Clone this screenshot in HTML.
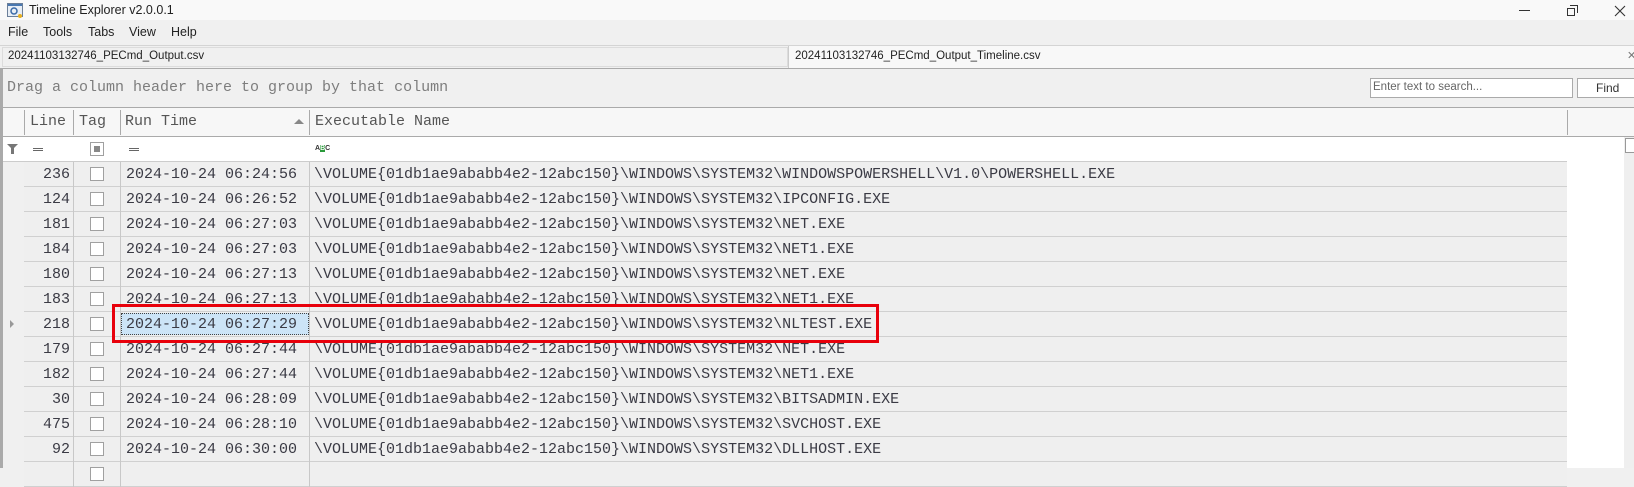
<!DOCTYPE html>
<html><head><meta charset="utf-8"><style>
*{margin:0;padding:0;box-sizing:border-box}
body{width:1634px;height:468px;overflow:hidden;background:#f0f0f0;font-family:"Liberation Sans",sans-serif;position:relative;color:#222}
.a{position:absolute}
.mono{font-family:"Liberation Mono",monospace;font-size:15px;color:#3a3a44;white-space:pre}
.ui{font-size:12.5px;white-space:pre}
.vl{position:absolute;width:1px;background:#c8c8c8}
.cb{position:absolute;width:14px;height:14px;border:1px solid #a0a0a0;background:#fff}
</style></head><body>
<!-- title -->
<div class="a" style="left:0;top:0;width:1634px;height:20px;background:#f9f9f9"></div>
<svg class="a" style="left:7px;top:3px" width="16" height="15" viewBox="0 0 16 15"><rect x="0.5" y="0.5" width="15" height="13" fill="#e8eef5" stroke="#6b7f99"/><rect x="1" y="1" width="14" height="2" fill="#4a78b0"/><circle cx="7" cy="8" r="3" fill="none" stroke="#3a6aa8" stroke-width="1.5"/><circle cx="13" cy="13" r="2" fill="#e8b020"/></svg>
<div class="a ui" style="left:29px;top:3px;font-size:12.5px">Timeline Explorer v2.0.0.1</div>
<div class="a" style="left:1519px;top:10px;width:11px;height:1px;background:#333"></div>
<div class="a" style="left:1567px;top:8px;width:8px;height:8px;border:1px solid #333"></div>
<div class="a" style="left:1570px;top:5px;width:8px;height:8px;border-top:1px solid #333;border-right:1px solid #333"></div>
<svg class="a" style="left:1614px;top:5px" width="12" height="12" viewBox="0 0 12 12"><path d="M1 1L11 11M11 1L1 11" stroke="#333" stroke-width="1.1"/></svg>
<!-- menu -->
<div class="a ui" style="left:8px;top:25px">File</div>
<div class="a ui" style="left:43px;top:25px">Tools</div>
<div class="a ui" style="left:88px;top:25px">Tabs</div>
<div class="a ui" style="left:129px;top:25px">View</div>
<div class="a ui" style="left:171px;top:25px">Help</div>
<div class="a" style="left:0;top:45px;width:1634px;height:1px;background:#d4d4d4"></div>
<!-- tabs -->
<div class="a" style="left:2px;top:47px;width:786px;height:20px;background:#f0f0f0;border:1px solid #dcdcdc"></div>
<div class="a ui" style="left:8px;top:50px;font-size:11.5px">20241103132746_PECmd_Output.csv</div>
<div class="a" style="left:788px;top:46px;width:846px;height:22px;background:#f8f8f8;border-left:1px solid #ccc"></div>
<div class="a ui" style="left:795px;top:50px;font-size:11.5px">20241103132746_PECmd_Output_Timeline.csv</div>
<div class="a" style="left:1627px;top:49px;font-size:11px;color:#777">✕</div>
<div class="a" style="left:0;top:68px;width:1634px;height:1px;background:#aaa"></div>
<div class="a" style="left:0;top:68px;width:3px;height:400px;background:#aaa"></div>
<!-- group panel -->
<div class="a mono" style="left:7px;top:79px;color:#7d7d7d">Drag a column header here to group by that column</div>
<div class="a" style="left:1370px;top:78px;width:203px;height:20px;background:#fff;border:1px solid #aaa"></div>
<div class="a ui" style="left:1373px;top:81px;font-size:11.5px;color:#666">Enter text to search...</div>
<div class="a" style="left:1577px;top:78px;width:60px;height:20px;background:#fff;border:1px solid #aaa"></div>
<div class="a ui" style="left:1596px;top:81px;font-size:12px;color:#333">Find</div>
<div class="a" style="left:3px;top:107px;width:1631px;height:1px;background:#aaa"></div>
<!-- header -->
<div class="a" style="left:3px;top:108px;width:1631px;height:28px;background:#f7f7f7"></div>
<div class="a" style="left:3px;top:136px;width:1631px;height:1px;background:#aaa"></div>
<div class="vl" style="left:24px;top:110px;height:25px;background:#aaa"></div>
<div class="vl" style="left:73px;top:110px;height:25px;background:#aaa"></div>
<div class="vl" style="left:120px;top:110px;height:25px;background:#aaa"></div>
<div class="vl" style="left:309px;top:110px;height:25px;background:#aaa"></div>
<div class="vl" style="left:1567px;top:110px;height:25px;background:#aaa"></div>
<div class="a mono" style="left:30px;top:113px;color:#555">Line</div>
<div class="a mono" style="left:79px;top:113px;color:#555">Tag</div>
<div class="a mono" style="left:125px;top:113px;color:#555">Run Time</div>
<div class="a" style="left:294px;top:119px;width:0;height:0;border-left:5px solid transparent;border-right:5px solid transparent;border-bottom:5px solid #888"></div>
<div class="a mono" style="left:315px;top:113px;color:#555">Executable Name</div>
<!-- filter row -->
<div class="a" style="left:3px;top:137px;width:1564px;height:24px;background:#fff"></div>
<div class="a" style="left:1567px;top:137px;width:57px;height:331px;background:#fff"></div>
<div class="a" style="left:1624px;top:137px;width:10px;height:331px;background:#efefef"></div>
<div class="a" style="left:1625px;top:138px;width:10px;height:15px;border:1px solid #999;background:#fff"></div>
<svg class="a" style="left:7px;top:144px" width="11" height="10" viewBox="0 0 11 10"><path d="M0 0H11L7 4V10H4V4Z" fill="#777"/></svg>
<div class="a" style="left:33px;top:148px;width:10px;height:3px;border-top:1px solid #666;border-bottom:1px solid #666"></div>
<div class="a" style="left:129px;top:148px;width:10px;height:3px;border-top:1px solid #666;border-bottom:1px solid #666"></div>
<div class="cb" style="left:90px;top:142px"></div>
<div class="a" style="left:94px;top:146px;width:6px;height:6px;background:#888"></div>
<div class="a" style="left:315px;top:145px;font-size:7px;font-weight:bold;color:#333">A<span style="background:#2a9a3a;color:#fff">B</span>C</div>
<div class="a" style="left:3px;top:161px;width:1564px;height:1px;background:#ccc"></div>
<div id="rows"></div>
<script>
var d=[["236","06:24:56","WINDOWSPOWERSHELL\\V1.0\\POWERSHELL.EXE"],["124","06:26:52","IPCONFIG.EXE"],["181","06:27:03","NET.EXE"],["184","06:27:03","NET1.EXE"],["180","06:27:13","NET.EXE"],["183","06:27:13","NET1.EXE"],["218","06:27:29","NLTEST.EXE"],["179","06:27:44","NET.EXE"],["182","06:27:44","NET1.EXE"],["30","06:28:09","BITSADMIN.EXE"],["475","06:28:10","SVCHOST.EXE"],["92","06:30:00","DLLHOST.EXE"],["","",""]];
var h="";
d.forEach(function(r,i){var y=162+i*25;
h+='<div class="a" style="left:24px;top:'+y+'px;width:1543px;height:24px;background:#efefef"></div>';
h+='<div class="a" style="left:24px;top:'+(y+24)+'px;width:1543px;height:1px;background:#d0d0d0"></div>';
h+='<div class="vl" style="left:73px;top:'+y+'px;height:25px"></div><div class="vl" style="left:120px;top:'+y+'px;height:25px"></div><div class="vl" style="left:309px;top:'+y+'px;height:25px"></div>';
h+='<div class="cb" style="left:90px;top:'+(y+5)+'px"></div>';
if(i==6){h+='<div class="a" style="left:121px;top:'+(y+1)+'px;width:188px;height:22px;background:#cce4f7;border:1px dotted #444"></div>';
h+='<div class="a" style="left:10px;top:'+(y+8)+'px;width:0;height:0;border-top:4px solid transparent;border-bottom:4px solid transparent;border-left:4px solid #999"></div>';}
if(r[0]){h+='<div class="a mono" style="left:30px;width:40px;text-align:right;top:'+(y+4)+'px">'+r[0]+'</div>';
h+='<div class="a mono" style="left:126px;top:'+(y+4)+'px">2024-10-24 '+r[1]+'</div>';
h+='<div class="a mono" style="left:314px;top:'+(y+4)+'px">\\VOLUME{01db1ae9ababb4e2-12abc150}\\WINDOWS\\SYSTEM32\\'+r[2]+'</div>';}
});
h+='<div class="a" style="left:112px;top:304px;width:767px;height:39px;border:3px solid #e8000b"></div>';
document.getElementById("rows").innerHTML=h;
</script>
</body></html>
